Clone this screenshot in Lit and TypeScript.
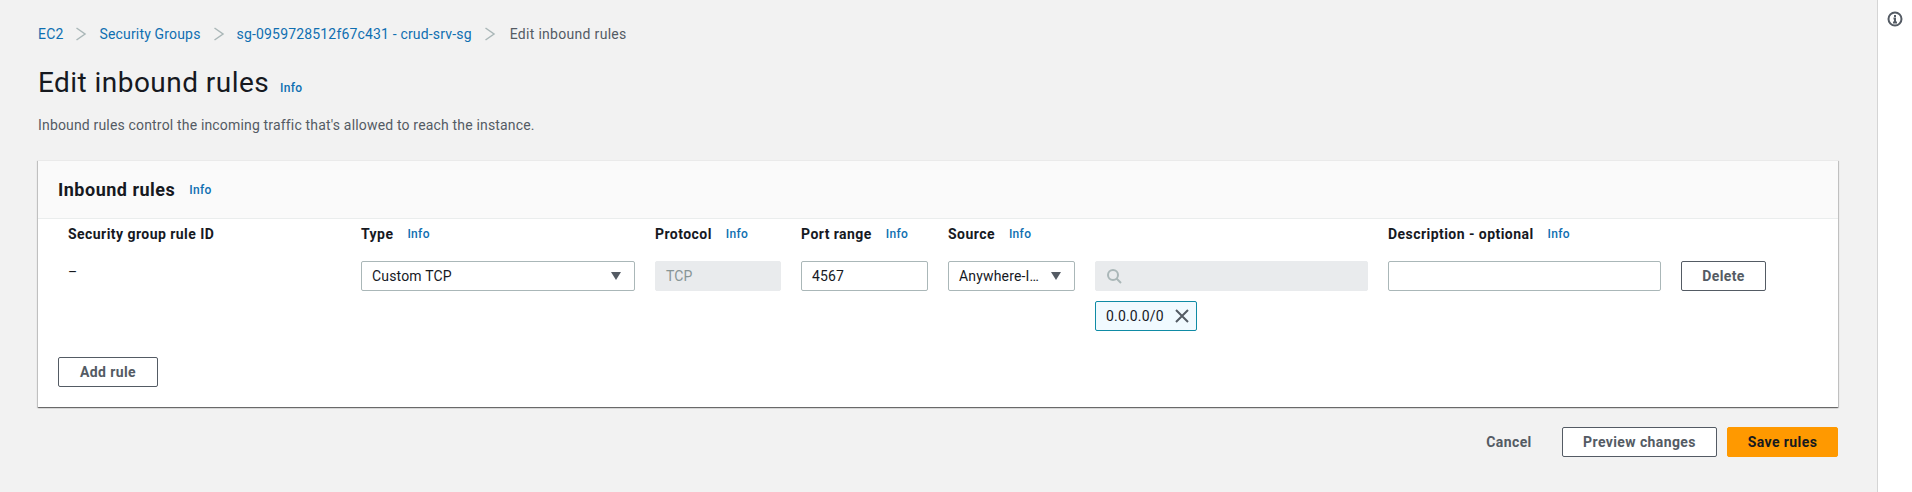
import { LitElement, html, css } from 'lit';
import { customElement } from 'lit/decorators.js';

const chevron = html`<svg class="chev" width="16" height="16" viewBox="0 0 16 16"><path d="M3.5 2 L12 8 L3.5 14" fill="none" stroke="#aab7b8" stroke-width="1.5"/></svg>`;

@customElement('app-root')
export class AppRoot extends LitElement {
  static styles = css`
    :host {
      display: flex;
      min-height: 492px;
      background: #f2f2f2;
      font-family: Roboto, "Liberation Sans", sans-serif;
      font-size: 14px;
      line-height: 20px;
      letter-spacing: .17px;
      color: #16191f;
    }

    main {
      width: 1800px;
      margin-left: 38px;
      padding-top: 24px;
    }

    .side {
      margin-left: 39px;
      flex: 1;
      background: #fff;
      border-left: 1px solid #d5d5d5;
      display: flex;
      justify-content: center;
      padding-top: 11px;
      align-items: flex-start;
    }

    a, .info { color: #0f6fb1; text-decoration: none; }
    .info { font-size: 12px; font-weight: 500; letter-spacing: .3px; }

    .crumbs {
      display: flex;
      align-items: center;
      height: 20px;
    }
    .chev { margin: 0 10px; }
    .crumbs .cur { color: #545b64; letter-spacing: .3px; margin-left: 2px; }

    h1 {
      margin: 25px 0 0;
      font-size: 28px;
      line-height: 28px;
      font-weight: 400;
      letter-spacing: .45px;
      display: flex;
      align-items: baseline;
      gap: 11px;
      height: 28px;
    }

    .desc { margin: 18px 0 0; color: #545b64; line-height: 20px; }

    .card {
      margin-top: 25px;
      background: #fff;
      height: 246px;
      box-shadow: 0 1px 1px 0 rgba(0,0,0,.4), 1px 1px 1px 0 rgba(0,0,0,.15), -1px 1px 1px 0 rgba(0,0,0,.15);
      border-top: 1px solid #eaeaea;
      display: flex;
      flex-direction: column;
    }

    .card-head {
      height: 58px;
      box-sizing: border-box;
      background: #fafafa;
      border-bottom: 1px solid #eaeded;
      padding: 0 20px;
      display: flex;
      align-items: center;
      gap: 14px;
    }
    .card-head h2 {
      margin: 0;
      font-size: 18px;
      font-weight: 700;
      line-height: 22px;
      letter-spacing: .5px;
    }

    .grid {
      display: grid;
      grid-template-columns: 273px 274px 126px 127px 127px 273px 273px 85px;
      column-gap: 20px;
      padding: 5px 0 0 30px;
    }

    .label {
      height: 20px;
      font-weight: 700;
      letter-spacing: .45px;
      display: flex;
      align-items: center;
      gap: 14px;
      margin-bottom: 17px;
    }
    .label.blank { margin: 0; }

    .field {
      height: 30px;
      box-sizing: border-box;
      border: 1px solid #aab7b8;
      border-radius: 2px;
      background: #fff;
      padding: 0 13px 0 10px;
      display: flex;
      align-items: center;
      justify-content: space-between;
      white-space: nowrap;
    }
    .field.off {
      background: #e9ebed;
      border-color: #e9ebed;
      color: #879596;
    }
    .field.search { justify-content: flex-start; }
    .caret {
      width: 0;
      height: 0;
      border-left: 5px solid transparent;
      border-right: 5px solid transparent;
      border-top: 8px solid #545b64;
      flex: none;
    }

    .dash { margin-top: 1px; }

    .token {
      margin-top: 10px;
      width: 102px;
      height: 30px;
      box-sizing: border-box;
      border: 1px solid #0f8ba5;
      border-radius: 2px;
      background: #f1faff;
      padding: 0 6px 0 10px;
      display: flex;
      align-items: center;
      justify-content: space-between;
    }

    .btn {
      height: 30px;
      box-sizing: border-box;
      border: 1px solid #545b64;
      border-radius: 2px;
      background: #fff;
      color: #545b64;
      font: 700 14px/20px Roboto, "Liberation Sans", sans-serif;
      letter-spacing: .4px;
      padding: 0;
      display: block;
    }
    .btn.delete { width: 85px; }

    .add-row { padding: 0 0 0 20px; margin-top: 26px; }
    .btn.add { width: 100px; }

    .actions {
      display: flex;
      justify-content: flex-end;
      align-items: center;
      margin-top: 20px;
    }
    .btn.link { border: 0; background: none; width: 80px; }
    .btn.preview { width: 155px; margin-left: 13px; }
    .btn.save {
      width: 111px;
      margin-left: 10px;
      background: #ff9900;
      border-color: #ff9900;
      color: #16191f;
    }
  `;

  render() {
    return html`
      <main>
        <nav class="crumbs">
          <a href="#">EC2</a>${chevron}
          <a href="#">Security Groups</a>${chevron}
          <a href="#">sg-0959728512f67c431 - crud-srv-sg</a>${chevron}
          <span class="cur">Edit inbound rules</span>
        </nav>
        <h1>Edit inbound rules <a class="info" href="#">Info</a></h1>
        <p class="desc">Inbound rules control the incoming traffic that's allowed to reach the instance.</p>

        <section class="card">
          <div class="card-head">
            <h2>Inbound rules</h2>
            <a class="info" href="#">Info</a>
          </div>
          <div class="grid">
            <div class="label">Security group rule ID</div>
            <div class="label">Type <a class="info" href="#">Info</a></div>
            <div class="label">Protocol <a class="info" href="#">Info</a></div>
            <div class="label">Port range <a class="info" href="#">Info</a></div>
            <div class="label">Source <a class="info" href="#">Info</a></div>
            <div class="label blank"></div>
            <div class="label">Description - optional <a class="info" href="#">Info</a></div>
            <div class="label blank"></div>

            <div class="dash">–</div>
            <div class="field">Custom TCP <span class="caret"></span></div>
            <div class="field off">TCP</div>
            <div class="field">4567</div>
            <div class="field">Anywhere-I… <span class="caret"></span></div>
            <div>
              <div class="field off search">
                <svg width="16" height="16" viewBox="0 0 16 16"><circle cx="7" cy="7" r="5" fill="none" stroke="#aab7b8" stroke-width="2"/><path d="M10.5 10.5 L15 15" stroke="#aab7b8" stroke-width="2"/></svg>
              </div>
              <div class="token">
                <span>0.0.0.0/0</span>
                <svg width="16" height="16" viewBox="0 0 16 16"><path d="M2 2 L14 14 M14 2 L2 14" stroke="#545b64" stroke-width="2" fill="none"/></svg>
              </div>
            </div>
            <div class="field"></div>
            <button class="btn delete">Delete</button>
          </div>
          <div class="add-row"><button class="btn add">Add rule</button></div>
        </section>

        <div class="actions">
          <button class="btn link">Cancel</button>
          <button class="btn preview">Preview changes</button>
          <button class="btn save">Save rules</button>
        </div>
      </main>
      <aside class="side">
        <svg width="16" height="16" viewBox="0 0 16 16">
          <circle cx="8" cy="8" r="6.5" fill="none" stroke="#545b64" stroke-width="2"/>
          <path d="M8 4 V6 M6.5 7.5 H8 V11.5 M6 11.5 H10" fill="none" stroke="#545b64" stroke-width="2"/>
        </svg>
      </aside>
    `;
  }
}
